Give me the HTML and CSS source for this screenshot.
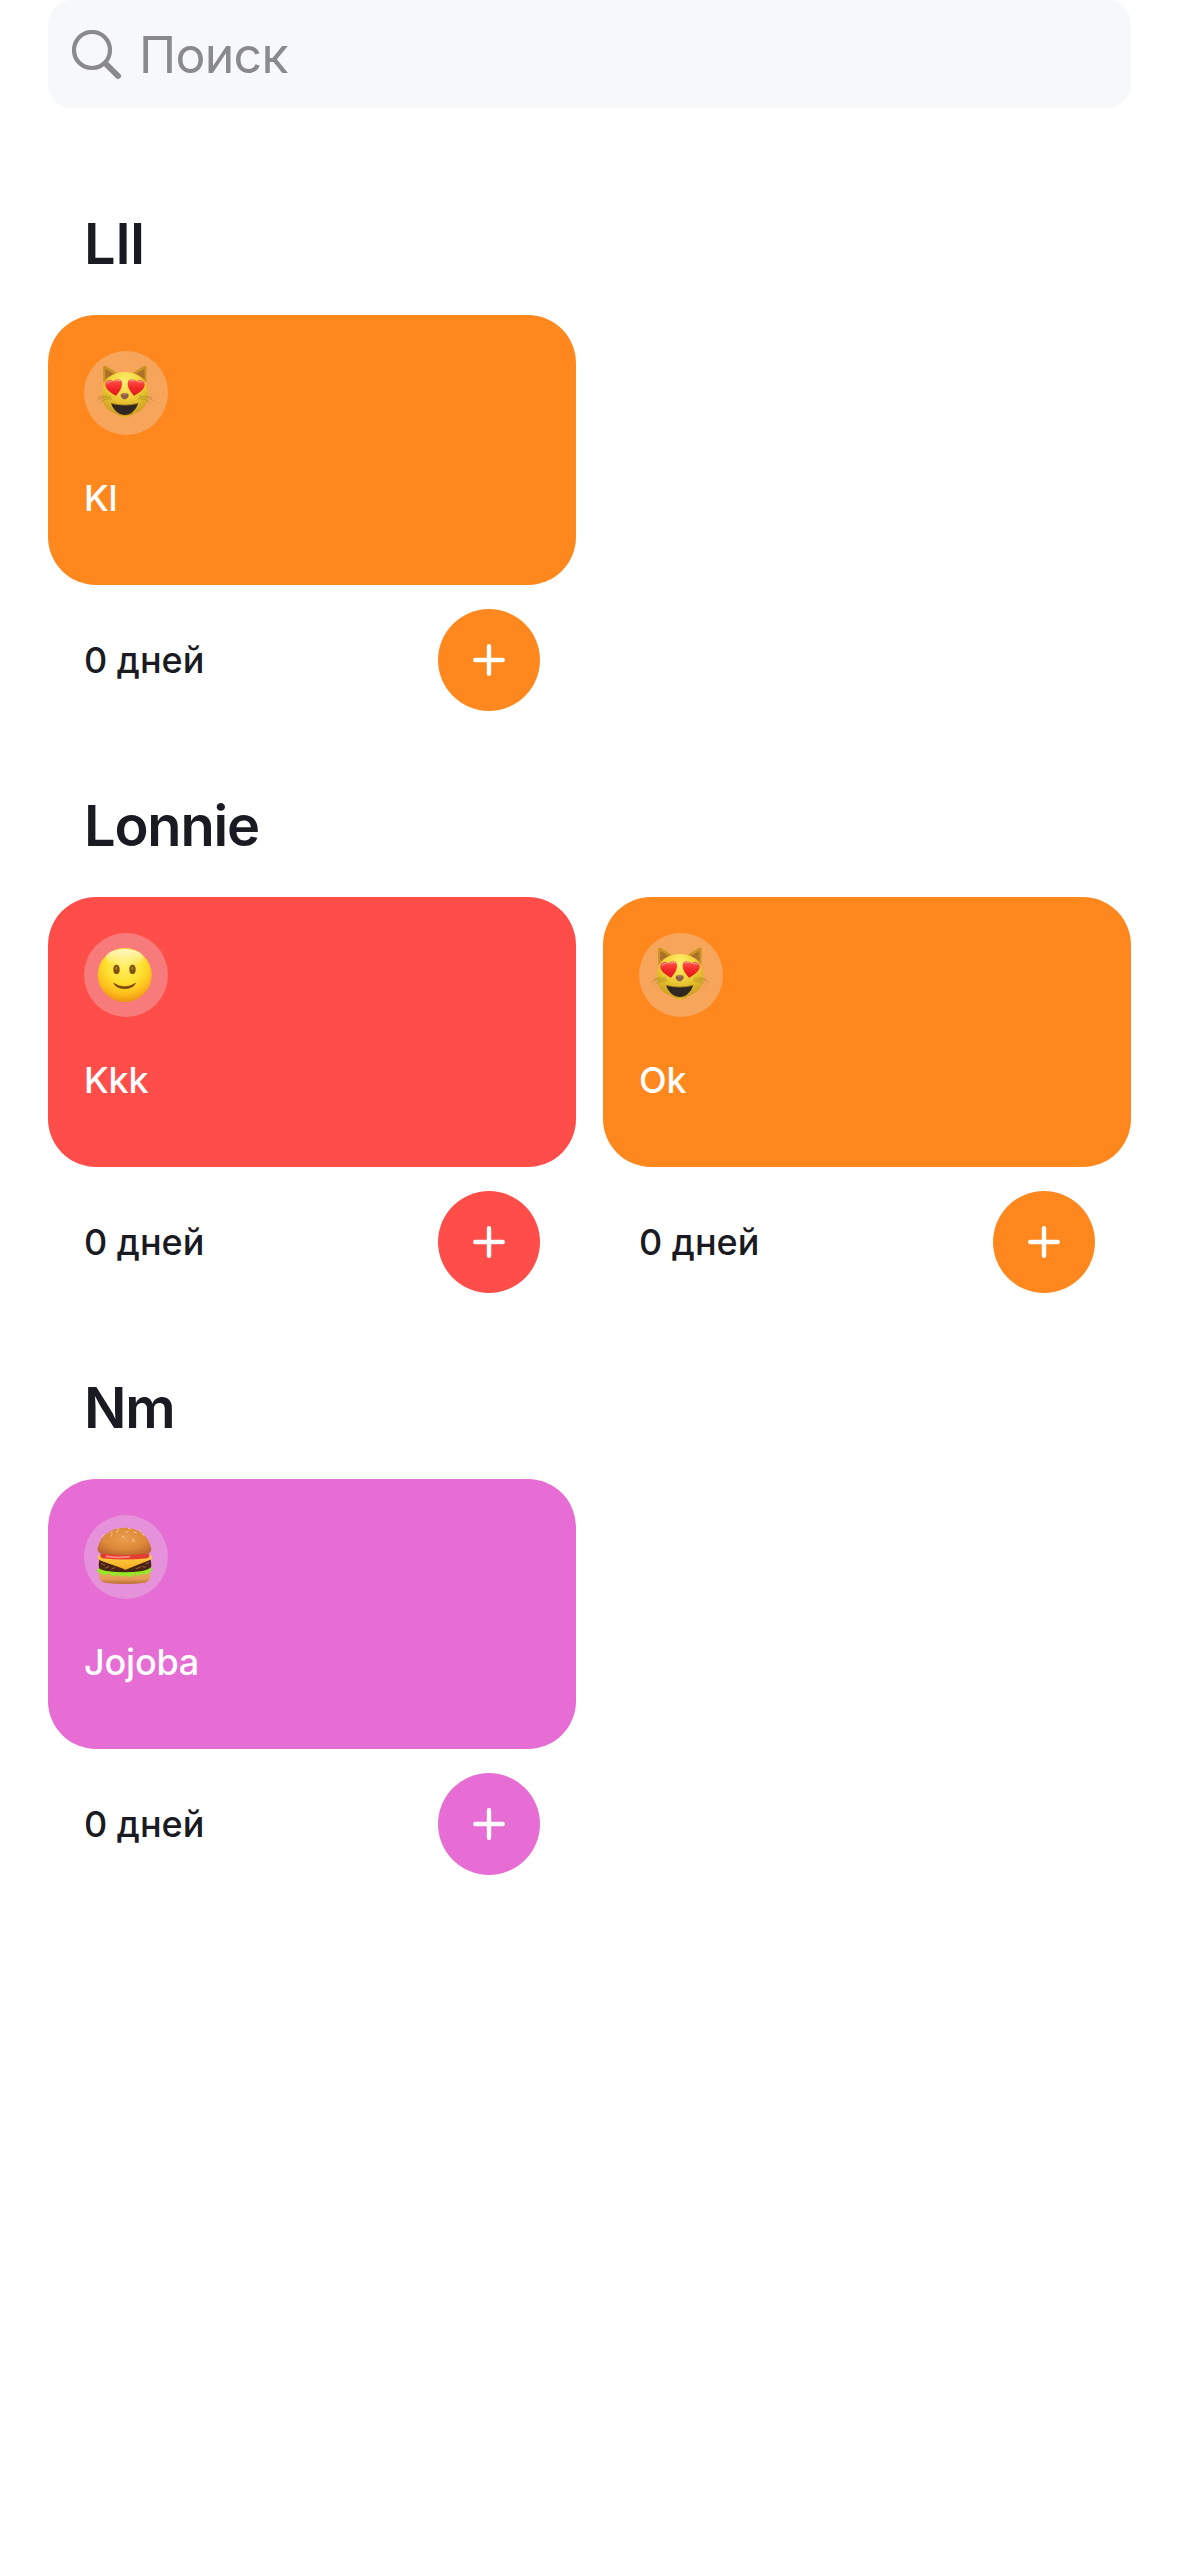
FILE: index.html
```html
<!DOCTYPE html>
<html lang="ru">
<head>
<meta charset="utf-8">
<title>Трекеры</title>
<link rel="stylesheet" href="styles.css">
</head>
<body>
<svg class="defs" width="0" height="0" aria-hidden="true">
  <defs>
    <radialGradient id="catFace" cx=".5" cy=".2" r=".8">
      <stop offset="0" stop-color="#fff06e"/><stop offset=".45" stop-color="#f0d038"/><stop offset="1" stop-color="#c9961c"/>
    </radialGradient>
    <linearGradient id="heart" x1="0" y1="0" x2="0" y2="1">
      <stop offset="0" stop-color="#ff5850"/><stop offset=".5" stop-color="#f52a28"/><stop offset="1" stop-color="#dc1820"/>
    </linearGradient>
    <radialGradient id="smileFace" cx=".5" cy=".3" r=".7">
      <stop offset="0" stop-color="#fff06a"/><stop offset=".5" stop-color="#ffe02e"/><stop offset=".8" stop-color="#fcbc1c"/><stop offset="1" stop-color="#ee9512"/>
    </radialGradient>
    <linearGradient id="shine" x1="0" y1="0" x2="0" y2="1">
      <stop offset="0" stop-color="#fff" stop-opacity=".7"/><stop offset="1" stop-color="#fff" stop-opacity="0"/>
    </linearGradient>
    <radialGradient id="bun" cx=".5" cy=".4" r=".65">
      <stop offset="0" stop-color="#eb9d4d"/><stop offset=".6" stop-color="#dd8a3a"/><stop offset="1" stop-color="#b9672a"/>
    </radialGradient>
    <linearGradient id="bunBase" x1="0" y1="0" x2="0" y2="1">
      <stop offset="0" stop-color="#eba861"/><stop offset=".6" stop-color="#e39a55"/><stop offset="1" stop-color="#bd6c30"/>
    </linearGradient>
    <linearGradient id="cheese" x1="0" y1="0" x2="0" y2="1">
      <stop offset="0" stop-color="#ffd044"/><stop offset="1" stop-color="#f5a91e"/>
    </linearGradient>
    <symbol id="cat" viewBox="24 33 252 252">
      <path d="M82 128 81 82Q82 74 90 78L124 100ZM211 128 212 82Q211 74 203 78L169 100Z" fill="#c99421"/>
      <path d="M87 116 88 86 114 102ZM206 116 205 86 179 102Z" fill="#ad702c"/>
      <path d="M146 96C184 96 210 116 215 148C222 176 211 204 187 216C170 222 158 233 147 234C136 233 124 222 107 216C83 204 72 176 79 148C84 116 110 96 146 96Z" fill="url(#catFace)"/>
      <path d="M61 182Q78 170 105 173M66 173Q82 166 106 168M71 188Q84 175 108 177M233 182Q216 170 189 173M228 173Q212 166 188 168M223 188Q210 175 186 177" fill="none" stroke="#806420" stroke-width="1.5" opacity=".65"/>
      <path d="M120 167C105 159 88 147 88 134C88 120 105 116 113 125C119 115 136 115 138 128C139 142 130 156 120 167Z" fill="url(#heart)"/>
      <path d="M174 167C189 159 206 147 206 134C206 120 189 116 181 125C175 115 157 115 155 128C154 142 164 156 174 167Z" fill="url(#heart)"/>
      <path d="M94 130Q97 123 105 124M120 124Q125 118 131 122M162 124Q166 118 173 122M187 125Q193 121 199 127" fill="none" stroke="#ffb2a5" stroke-width="3" stroke-linecap="round"/>
      <path d="M134 164Q136 159 147 160Q156 159 158 164C159 172 150 179 146 178C142 179 133 172 134 164Z" fill="#8f6047"/>
      <path d="M137 162Q146 158 155 162Q147 166 137 162Z" fill="#b68470"/>
      <path d="M106 191Q146 200 186 191C180 210 164 225 147 225C130 225 112 211 106 191Z" fill="#302722"/>
      <path d="M105 190Q146 201 187 190" fill="none" stroke="#755010" stroke-width="2"/>
      <path d="M128 224Q146 232 165 224Q152 235 146 235Q139 234 128 224Z" fill="#f1bd3a" opacity=".7"/>
    </symbol>
    <symbol id="smile" viewBox="24 33 252 252">
      <circle cx="146" cy="159" r="81" fill="url(#smileFace)"/>
      <ellipse cx="146" cy="107" rx="56" ry="26" fill="url(#shine)"/>
      <ellipse cx="121.500" cy="142.500" rx="9.500" ry="14" fill="#80500c"/>
      <ellipse cx="169.500" cy="142.500" rx="9.500" ry="14" fill="#80500c"/>
      <ellipse cx="121" cy="139" rx="3.500" ry="6" fill="#a77625"/>
      <ellipse cx="169" cy="139" rx="3.500" ry="6" fill="#a77625"/>
      <path d="M113 184Q146 205 179 184Q169 200 146 200Q123 200 113 184Z" fill="#77430c" stroke="#77430c" stroke-width="2" stroke-linejoin="round"/>
    </symbol>
    <symbol id="burger" viewBox="24 33 252 252">
      <path d="M69 203H223C225 225 219 232 206 236Q146 244 87 236C72 232 68 222 69 203Z" fill="url(#bunBase)"/>
      <path d="M70 167H224Q228 184 224 198Q204 209 146 207Q88 209 70 198Q66 182 70 167Z" fill="#482316"/>
      <path d="M67 192C60 201 67 209 76 208C84 218 92 213 99 207C108 220 119 218 126 211C135 220 144 219 151 213C161 222 171 219 177 210C188 219 196 214 201 208C210 214 218 212 219 204C230 203 229 197 225 190C219 196 210 199 200 201Q146 209 92 201C82 199 73 197 67 192Z" fill="#95e826"/>
      <path d="M77 179l9 4M88 192l10-4M107 195l9-4M181 194l12-5M199 187l9 3M211 179l7-3" stroke="#89502e" stroke-width="4" stroke-linecap="round"/>
      <path d="M66 154Q146 166 227 154L228 161Q227 166 221 168L154 195Q148 200 142 194L75 170Q66 167 65 160Z" fill="url(#cheese)"/>
      <path d="M74 148H218Q223 159 214 163Q146 170 79 163Q70 159 74 148Z" fill="#e43b32"/>
      <path d="M92 157Q125 163 160 158" fill="none" stroke="#ff8b7d" stroke-width="5" stroke-linecap="round"/>
      <path d="M146 71C192 71 219 99 226 134C227 145 218 149 207 150Q146 156 85 150C71 149 63 144 65 133C72 97 102 71 146 71Z" fill="url(#bun)"/>
      <path d="M104 87l4-4M105 97l3-5M125 74l3 2M139 97l6 4M150 84l6-1M157 74l6 1M174 84l7 3M175 112l-5-6M170 113l3-6M203 93l-5-4M190 79l4 2M84 93l-4 4M121 84l5-3" stroke="#f4ce94" stroke-width="3" stroke-linecap="round"/>
    </symbol>
    <symbol id="plus" viewBox="0 0 32 32">
      <path d="M16 2.300V29.700M2.300 16H29.700" fill="none" stroke="#fff" stroke-width="4.400" stroke-linecap="round"/>
    </symbol>
  </defs>
</svg>
<main class="page">
  <label class="search">
    <svg class="search-icon" viewBox="0 0 50 50"><circle cx="20" cy="20" r="18" fill="none" stroke="#8a8a8e" stroke-width="4.200"/><path d="M33.500 33.500 46 46" stroke="#8a8a8e" stroke-width="6" stroke-linecap="round"/></svg>
    <span class="placeholder">Поиск</span>
  </label>

  <section class="category">
    <h2 class="category-title title-loose">Lll</h2>
    <div class="trackers">
      <article class="tracker orange">
        <div class="card"><span class="emoji"><svg><use href="#cat"/></svg></span><p class="name">Kl</p></div>
        <div class="footer"><span class="days">0 дней</span><button class="add" aria-label="Добавить"><svg><use href="#plus"/></svg></button></div>
      </article>
    </div>
  </section>

  <section class="category">
    <h2 class="category-title">Lonnie</h2>
    <div class="trackers">
      <article class="tracker red">
        <div class="card"><span class="emoji"><svg><use href="#smile"/></svg></span><p class="name">Kkk</p></div>
        <div class="footer"><span class="days">0 дней</span><button class="add" aria-label="Добавить"><svg><use href="#plus"/></svg></button></div>
      </article>
      <article class="tracker orange">
        <div class="card"><span class="emoji"><svg><use href="#cat"/></svg></span><p class="name">Ok</p></div>
        <div class="footer"><span class="days">0 дней</span><button class="add" aria-label="Добавить"><svg><use href="#plus"/></svg></button></div>
      </article>
    </div>
  </section>

  <section class="category">
    <h2 class="category-title">Nm</h2>
    <div class="trackers">
      <article class="tracker pink">
        <div class="card"><span class="emoji"><svg><use href="#burger"/></svg></span><p class="name">Jojoba</p></div>
        <div class="footer"><span class="days">0 дней</span><button class="add" aria-label="Добавить"><svg><use href="#plus"/></svg></button></div>
      </article>
    </div>
  </section>
</main>
</body>
</html>
```
FILE: styles.css
```css
* { box-sizing: border-box; }

body {
  margin: 0;
  background: #fff;
  color: #1a1b22;
  font-family: Inter, "Liberation Sans", sans-serif;
}

.defs { display: block; }

.page {
  min-height: 2556px;
  padding: 0 48px;
}

.search {
  display: flex;
  align-items: center;
  height: 108px;
  padding: 2px 0 0 24px;
  gap: 17px;
  border-radius: 24px;
  background: #f7f8fa;
}

.search-icon { width: 50px; height: 50px; }

.placeholder {
  color: #8a8a8e;
  font-size: 50px;
  line-height: 60px;
  letter-spacing: -0.7px;
}

.category {
  height: 582px;
  padding-top: 100px;
}

.category-title {
  margin: 0;
  padding-left: 36px;
  height: 72px;
  font-size: 56px;
  line-height: 72px;
  font-weight: 600;
  letter-spacing: -1.2px;
}

.title-loose { letter-spacing: 0; }

.trackers {
  display: grid;
  grid-template-columns: 528px 528px;
  column-gap: 27px;
  padding-top: 35px;
}

.orange { --tint: #ff881e; }
.red { --tint: #ff4d49; }
.pink { --tint: #e66dd4; }

.card {
  display: flex;
  flex-direction: column;
  gap: 36px;
  height: 270px;
  padding: 36px;
  border-radius: 48px;
  background: var(--tint);
}

.emoji {
  width: 84px;
  height: 84px;
  border-radius: 50%;
  background: rgba(230, 232, 235, 0.3);
}

.emoji svg {
  display: block;
  width: 84px;
  height: 84px;
}

.name {
  margin: 0;
  color: #fff;
  font-size: 36px;
  line-height: 54px;
  font-weight: 500;
  letter-spacing: -0.2px;
}

.footer {
  display: flex;
  align-items: center;
  justify-content: space-between;
  padding: 24px 36px 0;
}

.days {
  font-size: 36px;
  line-height: 54px;
  font-weight: 500;
}

.add {
  display: flex;
  align-items: center;
  justify-content: center;
  width: 102px;
  height: 102px;
  padding: 0 0 1px;
  border: 0;
  border-radius: 50%;
  background: var(--tint);
}

.add svg { width: 32px; height: 32px; }
```
